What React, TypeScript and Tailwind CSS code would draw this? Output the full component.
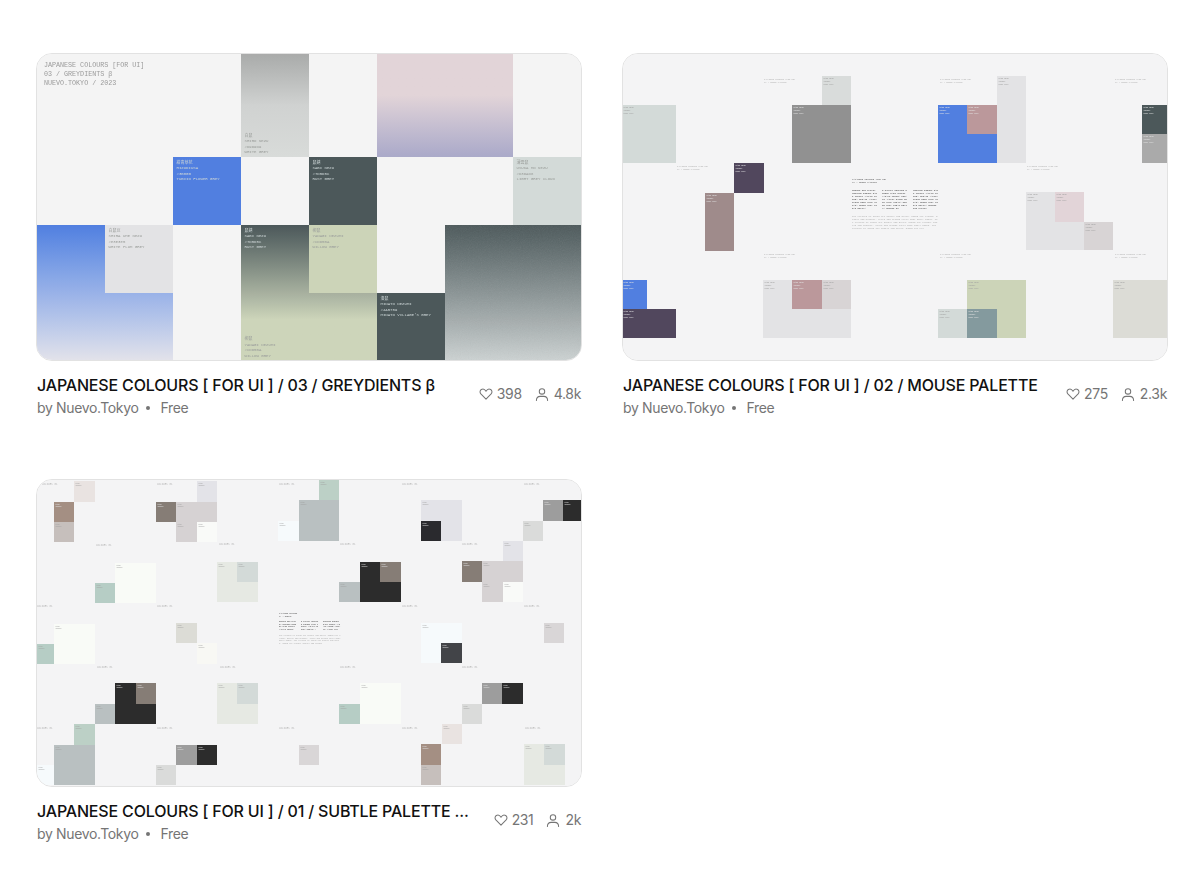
const mono = "[font-family:'Liberation_Mono','Noto_Sans_CJK_JP',monospace]";

type Box = [number, number, number, number, string];

function lum(hex: string) {
  const r = parseInt(hex.slice(1, 3), 16);
  const g = parseInt(hex.slice(3, 5), 16);
  const b = parseInt(hex.slice(5, 7), 16);
  return 0.3 * r + 0.59 * g + 0.11 * b;
}

function Label({ lines, className }: { lines: string[]; className: string }) {
  return (
    <div className={`${mono} whitespace-pre ${className}`}>
      {lines.map((l, i) => (
        <div key={i}>{l}</div>
      ))}
    </div>
  );
}

function Swatch({ lines, light, bottom, className }: { lines: string[]; light?: boolean; bottom?: boolean; className: string }) {
  return (
    <div className={`flex p-[4px] pl-[3.5px] ${bottom ? "items-end" : "items-start"} ${className}`}>
      <Label
        lines={lines}
        className={`text-[4px] leading-[5.5px] ${light ? "text-[#cdd5d6]" : "text-[#9a9d9a]"}`}
      />
    </div>
  );
}

function Grain() {
  return (
    <svg className="absolute inset-0 h-full w-full opacity-[0.1]">
      <filter id="grain">
        <feTurbulence type="fractalNoise" baseFrequency="1.1" numOctaves="2" stitchTiles="stitch" />
        <feColorMatrix type="saturate" values="0" />
      </filter>
      <rect width="100%" height="100%" filter="url(#grain)" />
    </svg>
  );
}

function ThumbGrey() {
  return (
    <div className="grid h-full grid-cols-8 grid-rows-[102.5px_68px_68px_67.5px] bg-[#f4f4f4] opacity-[0.99]">
      <div className="col-span-3 col-start-1 row-start-1 p-[7px]">
        <Label
          lines={["JAPANESE COLOURS [FOR UI]", "03 / GREYDIENTS β", "NUEVO.TOKYO / 2023"]}
          className="text-[6.7px] leading-[9px] text-[#9a9a9a]"
        />
      </div>
      <Swatch
        bottom
        lines={["白鼠", "SHIRO NEZU", "#D9D9D9", "WHITE GREY"]}
        className="col-start-4 row-start-1 bg-gradient-to-b from-[#a9abaa] via-[#d0d2d1] via-50% to-[#d8dbd9] pb-[1px]"
      />
      <div className="col-span-2 col-start-6 row-start-1 bg-gradient-to-b from-[#e2d4d8] from-40% to-[#aaa9c9]" />
      <Swatch
        light
        lines={["紺青草花", "HIZUDIUSA", "#3B00G", "TUBIIO FLOWER GREY"]}
        className="col-start-3 row-start-2 bg-[#4f7ee0]"
      />
      <Swatch
        light
        lines={["鼠錆", "SABI NEZU", "#7D5D5C", "RUST GREY"]}
        className="col-start-5 row-start-2 bg-[#4a5759]"
      />
      <Swatch
        lines={["薄雲鼠", "USUKA MO NEZU", "#D3DAD8", "LIGHT GREY CLOUD"]}
        className="col-start-8 row-start-2 bg-[#d3dad8]"
      />
      <div className="col-span-2 col-start-1 row-span-2 row-start-3 bg-gradient-to-b from-[#4f7ee0] to-[#e2e2ea]" />
      <Swatch
        lines={["白鼠豆", "SHIRA UME NEZU", "#E3E3E5", "WHITE PLUM GREY"]}
        className="col-start-2 row-start-3 bg-[#e3e3e5]"
      />
      <div className="col-span-2 col-start-4 row-span-2 row-start-3 bg-gradient-to-b from-[#4a5759] to-[#cdd5ba] to-70%" />
      <Swatch
        light
        lines={["鼠錆", "SABI NEZU", "#7D5D5C", "RUST GREY"]}
        className="col-start-4 row-start-3"
      />
      <Swatch
        lines={["柳鼠", "YANAGI NEZUMI", "#CDD5BA", "WILLOW GREY"]}
        className="col-start-5 row-start-3 bg-[#ccd4b8]"
      />
      <Swatch
        bottom
        lines={["柳鼠", "YANAGI NEZUMI", "#CDD5BA", "WILLOW GREY"]}
        className="col-start-4 row-start-4 pb-[1px]"
      />
      <Swatch
        light
        lines={["湊鼠", "MINATO NEZUMI", "#4A5759", "MINATO VILLAGE'S GREY"]}
        className="col-start-6 row-start-4 bg-[#4a5759]"
      />
      <div className="relative col-span-2 col-start-7 row-span-2 row-start-3 overflow-hidden bg-gradient-to-b from-[#4a5759] to-[#ccd2d2]">
        <Grain />
      </div>
    </div>
  );
}

function Canvas({
  ox,
  oy,
  boxes,
  captions,
  capLines,
  capClass,
  labelLines,
  labelSize,
  center,
}: {
  ox: number;
  oy: number;
  boxes: Box[];
  captions: [number, number][];
  capLines: string[];
  capClass: string;
  labelLines: string[];
  labelSize: string;
  center: React.ReactNode;
}) {
  return (
    <div className="relative h-full overflow-hidden bg-[#f4f4f5] opacity-[0.99]">
      {boxes.map(([x1, y1, x2, y2, c], i) => (
        <div
          key={i}
          className="absolute overflow-hidden pl-[1.5px] pt-[2px]"
          style={{ left: x1 - ox, top: y1 - oy, width: x2 - x1, height: y2 - y1, background: c }}
        >
          <Label
            lines={labelLines}
            className={`${labelSize} ${lum(c) < 170 ? "text-[#e4e4e4]" : "text-[#a0a0a0]"}`}
          />
        </div>
      ))}
      {captions.map(([x, y], i) => (
        <div key={i} className="absolute" style={{ left: x - ox, top: y - oy }}>
          <Label lines={capLines} className={capClass} />
        </div>
      ))}
      {center}
    </div>
  );
}

const mouseBoxes: Box[] = [
  [622, 105, 676, 163, "#d3dad8"],
  [822, 76, 851, 105, "#d9dcdb"],
  [792, 105, 851, 163, "#909090"],
  [734, 163, 764, 193, "#4f455c"],
  [705, 193, 734, 251, "#9e8a8a"],
  [938, 105, 997, 163, "#4f7ee0"],
  [967, 105, 997, 134, "#bb979a"],
  [997, 76, 1026, 163, "#e3e3e5"],
  [1142, 105, 1168, 134, "#4a5759"],
  [1142, 134, 1168, 163, "#a9a9a9"],
  [1026, 192, 1084, 250, "#e3e3e5"],
  [1055, 192, 1084, 222, "#e2d4d8"],
  [1084, 222, 1113, 250, "#d8d4d5"],
  [622, 280, 647, 309, "#4f7ee0"],
  [622, 309, 676, 338, "#4f455c"],
  [763, 280, 851, 338, "#e3e3e5"],
  [792, 280, 822, 309, "#bb979a"],
  [822, 280, 851, 309, "#d8d4d5"],
  [967, 280, 1026, 338, "#ccd4b8"],
  [938, 309, 967, 338, "#d3dad8"],
  [967, 309, 997, 338, "#83999d"],
  [1113, 280, 1168, 338, "#dcdcd6"],
];

const mouseCaptions: [number, number][] = [
  [764, 78],
  [677, 165],
  [940, 78],
  [1115, 78],
  [1027, 165],
  [764, 253],
  [940, 253],
  [1115, 253],
];

const subtleBoxes: Box[] = [
  [74, 481, 95, 502, "#e9e3e1"],
  [54, 502, 74, 522, "#a38e82"],
  [54, 522, 74, 542, "#c6bfbc"],
  [197, 481, 217, 502, "#e3e3e8"],
  [156, 502, 176, 522, "#857c75"],
  [176, 502, 217, 522, "#d6d2d3"],
  [176, 522, 197, 542, "#d6d2d3"],
  [197, 522, 217, 542, "#f9faf8"],
  [299, 500, 339, 541, "#b9c0c1"],
  [278, 521, 299, 541, "#f6fafc"],
  [319, 480, 339, 500, "#bcd0c6"],
  [115, 563, 156, 603, "#f9fbf7"],
  [95, 583, 115, 603, "#b6cdc5"],
  [217, 562, 258, 602, "#e6e9e3"],
  [237, 562, 258, 582, "#d3dad8"],
  [54, 624, 95, 664, "#f9fbf7"],
  [37, 644, 54, 664, "#b6cdc5"],
  [176, 623, 197, 643, "#dcdcd6"],
  [197, 643, 217, 664, "#f8f8f4"],
  [421, 500, 462, 541, "#e3e3e8"],
  [421, 521, 441, 541, "#28282c"],
  [543, 500, 563, 521, "#9c9c9c"],
  [563, 500, 582, 521, "#2a2a2a"],
  [523, 521, 543, 541, "#dadbda"],
  [360, 562, 401, 602, "#2a2a2a"],
  [380, 562, 401, 582, "#857c75"],
  [339, 582, 360, 602, "#b9c0c1"],
  [503, 541, 523, 561, "#e3e3e8"],
  [462, 561, 482, 582, "#857c75"],
  [482, 561, 523, 582, "#d6d2d3"],
  [482, 582, 503, 602, "#d6d2d3"],
  [503, 582, 523, 602, "#f9faf8"],
  [421, 623, 462, 663, "#f6fafc"],
  [441, 643, 462, 663, "#404246"],
  [544, 623, 564, 643, "#d9d6d7"],
  [115, 683, 156, 724, "#2a2a2a"],
  [136, 683, 156, 704, "#857c75"],
  [95, 704, 115, 724, "#b9c0c1"],
  [217, 683, 258, 724, "#e6e9e3"],
  [237, 683, 258, 704, "#d3dad8"],
  [74, 724, 95, 745, "#bcd0c6"],
  [54, 745, 95, 785, "#b9c0c1"],
  [37, 765, 54, 785, "#f6fafc"],
  [176, 745, 197, 765, "#9c9c9c"],
  [197, 745, 217, 765, "#2a2a2a"],
  [156, 765, 176, 785, "#dadbda"],
  [299, 745, 319, 765, "#d9d6d7"],
  [360, 683, 401, 724, "#f9fbf7"],
  [339, 704, 360, 724, "#b6cdc5"],
  [482, 683, 502, 704, "#9c9c9c"],
  [502, 683, 523, 704, "#2a2a2a"],
  [462, 704, 482, 724, "#dadbda"],
  [442, 724, 462, 744, "#e9e3e1"],
  [421, 744, 441, 765, "#a38e82"],
  [421, 765, 441, 785, "#c6bfbc"],
  [524, 744, 565, 785, "#e6e9e3"],
  [544, 744, 565, 765, "#d3dad8"],
];

const subtleCaptions: [number, number][] = [
  [42, 483], [157, 483], [279, 483], [402, 483], [524, 483],
  [96, 544], [219, 543], [340, 543], [462, 543],
  [37, 605], [157, 605], [402, 605], [524, 605],
  [97, 666], [220, 666], [340, 666], [462, 666],
  [37, 727], [157, 727], [279, 727], [402, 727], [525, 727],
];

const dense =
  "NEZUMI IRO D9D9D9 USUKUMO E3E3E5 SABI 7D5D5C YANAGI CDD5BA MINATO 4A5759 SHIRO NEZU FUJI 9E8A8A MOUSE GREY KOBAI BB979A ";
const para =
  "The colours of Japan are subtle and quiet, named for plants, metals and weather. Greys and browns carry many small names. ";

function CenterText({
  x,
  y,
  heading,
  cols,
  colW,
  colChars,
  height,
  size,
  paraW,
  paraChars,
  gap,
}: {
  x: number;
  y: number;
  heading: string[];
  cols: number[];
  colW: number;
  colChars: number;
  height: number;
  size: string;
  paraW: number;
  paraChars: number;
  gap: string;
}) {
  return (
    <div className={`absolute ${size} ${gap} flex flex-col`} style={{ left: x, top: y, width: paraW }}>
      <Label lines={heading} className="text-[#555555]" />
      <div className="relative" style={{ height }}>
        {cols.map((c, i) => (
          <div key={i} className={`absolute break-all text-[#4a4a4a] ${mono}`} style={{ left: c, width: colW }}>
            {(dense + dense).slice(i * 9, i * 9 + colChars)}
          </div>
        ))}
      </div>
      <div className={`${mono} break-all text-[#aaaaaa]`}>{(para + para + para).slice(0, paraChars)}</div>
    </div>
  );
}

function HeartIcon() {
  return (
    <svg width="14" height="14" viewBox="0 0 15 15" fill="none" stroke="#757575" strokeWidth="1.1" strokeLinejoin="round">
      <path d="M7.5 13 L2 7.4 C0.6 5.9 0.9 3.6 2.5 2.7 C4.1 1.8 6.2 2.4 7.5 4.6 C8.8 2.4 10.9 1.8 12.5 2.7 C14.1 3.6 14.4 5.9 13 7.4 Z" />
    </svg>
  );
}

function UserIcon() {
  return (
    <svg width="14" height="15" viewBox="0 0 15 15" fill="none" stroke="#757575" strokeWidth="1.1" strokeLinecap="round">
      <circle cx="7.5" cy="4.2" r="2.9" />
      <path d="M1.5 14 C1.5 11 3.6 9.5 5.6 9.5 H9.4 C11.4 9.5 13.5 11 13.5 14" />
    </svg>
  );
}

function Card({
  thumb,
  title,
  likes,
  users,
}: {
  thumb: React.ReactNode;
  title: string;
  likes: string;
  users: string;
}) {
  return (
    <div className="flex flex-col">
      <div className="h-[308px] overflow-hidden rounded-2xl border border-[#e2e2e2]">{thumb}</div>
      <div className="flex items-start justify-between pl-[1px] pr-[1px] pt-[13px]">
        <div className="min-w-0">
          <div className="whitespace-nowrap text-[16px] leading-[22px] font-medium tracking-[-0.17px] text-[#111111]">{title}</div>
          <div className="mt-[2px] flex items-center text-[14px] leading-[20px] tracking-[-0.35px] text-[#757575]">
            <span>by Nuevo.Tokyo</span>
            <span className="ml-[8px] mr-[10px] h-[4px] w-[4px] rounded-full bg-[#757575]" />
            <span>Free</span>
          </div>
        </div>
        <div className="mt-[10px] flex shrink-0 items-center text-[14px] leading-[20px] tracking-[-0.35px] text-[#757575]">
          <HeartIcon />
          <span className="ml-[4px]">{likes}</span>
          <span className="ml-[13px]">
            <UserIcon />
          </span>
          <span className="ml-[5px]">{users}</span>
        </div>
      </div>
    </div>
  );
}

export default function App() {
  return (
    <div className="min-h-[869px] bg-white pl-[36px] pt-[53px] [font-family:Inter,'Liberation_Sans',sans-serif]">
      <div className="grid w-[1132px] grid-cols-2 gap-x-[40px] gap-y-[61px]">
        <Card
          thumb={<ThumbGrey />}
          title="JAPANESE COLOURS [ FOR UI ] / 03 / GREYDIENTS β"
          likes="398"
          users="4.8k"
        />
        <Card
          thumb={
            <Canvas
              ox={623}
              oy={54}
              boxes={mouseBoxes}
              captions={mouseCaptions}
              capLines={["JAPANESE COLOURS [FOR UI]", "02 / MOUSE PALETTE"]}
              capClass="text-[2.1px] leading-[3px] text-[#b0b0b0]"
              labelLines={["SABI NEZU", "7D5D5C", "RUST GREY"]}
              labelSize="text-[1.9px] leading-[2.8px]"
              center={
                <CenterText
                  x={229}
                  y={124}
                  heading={["JAPANESE COLOURS [FOR UI]", "02 / MOUSE PALETTE"]}
                  cols={[0, 30, 61]}
                  colW={25}
                  colChars={120}
                  height={21}
                  size="text-[2.3px] leading-[3px]"
                  paraW={86}
                  paraChars={300}
                  gap="gap-[5px]"
                />
              }
            />
          }
          title="JAPANESE COLOURS [ FOR UI ] / 02 / MOUSE PALETTE"
          likes="275"
          users="2.3k"
        />
        <Card
          thumb={
            <Canvas
              ox={37}
              oy={480}
              boxes={subtleBoxes}
              captions={subtleCaptions}
              capLines={["COLOURS 01"]}
              capClass="text-[2.6px] leading-[3px] text-[#bbbbbb]"
              labelLines={["SABI", "7D5D5C"]}
              labelSize="text-[1.7px] leading-[2.4px]"
              center={
                <CenterText
                  x={242}
                  y={133}
                  heading={["JAPANESE COLOURS", "01 / SUBTLE"]}
                  cols={[0, 22, 44]}
                  colW={18}
                  colChars={58}
                  height={11}
                  size="text-[1.9px] leading-[2.5px]"
                  paraW={62}
                  paraChars={200}
                  gap="gap-[3px]"
                />
              }
            />
          }
          title="JAPANESE COLOURS [ FOR UI ] / 01 / SUBTLE PALETTE ..."
          likes="231"
          users="2k"
        />
      </div>
    </div>
  );
}
